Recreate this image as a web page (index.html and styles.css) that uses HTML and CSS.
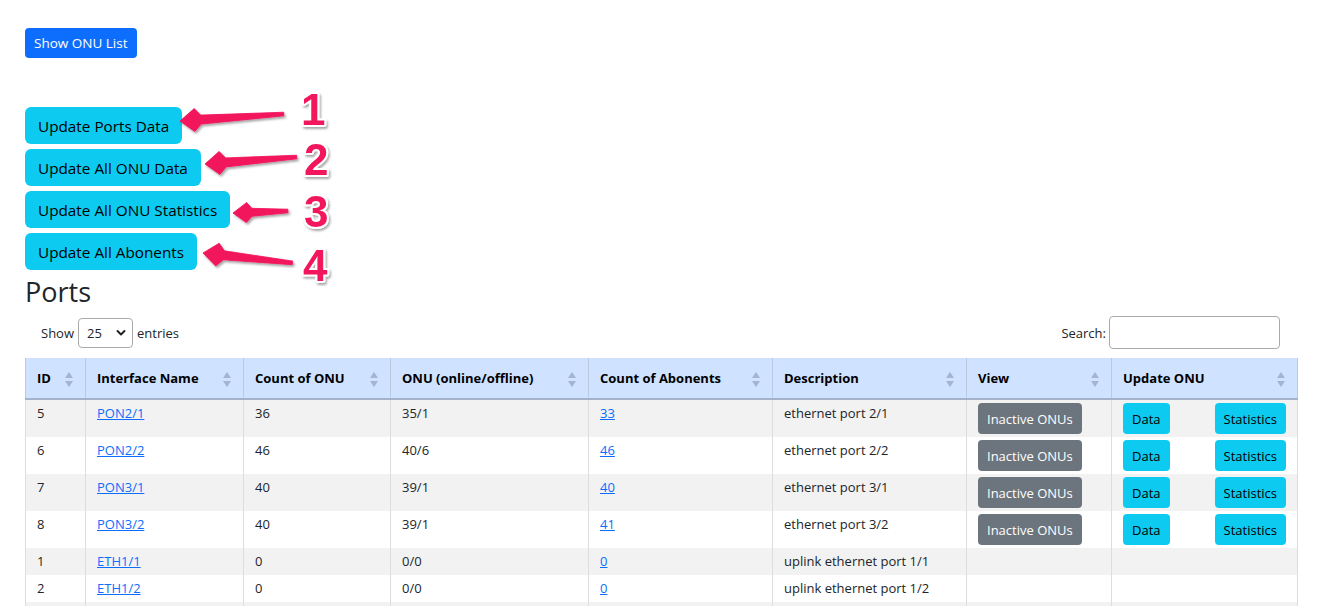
FILE: index.html
```html
<!DOCTYPE html>
<html lang="en">
<head>
<meta charset="utf-8">
<title>Ports</title>
<link rel="stylesheet" href="styles.css">
</head>
<body>
<main class="page">
  <div class="top-bar">
    <button class="btn btn-show">Show ONU List</button>
  </div>

  <div class="actions">
    <button class="btn btn-info btn-action">Update Ports Data</button>
    <button class="btn btn-info btn-action">Update All ONU Data</button>
    <button class="btn btn-info btn-action">Update All ONU Statistics</button>
    <button class="btn btn-info btn-action">Update All Abonents</button>
  </div>

  <h3 class="title">Ports</h3>

  <div class="dt-controls">
    <label class="dt-length">Show
      <span class="select-wrap">
        <select class="dt-select"><option>25</option><option>50</option><option>100</option></select>
        <svg class="chevron" width="10" height="8" viewBox="0 0 10 8"><path d="M1.5 2 L5 5.5 L8.5 2" fill="none" stroke="#222" stroke-width="2" stroke-linecap="round" stroke-linejoin="round"/></svg>
      </span>
      entries</label>
    <label class="dt-search">Search:<input class="dt-input" type="search"></label>
  </div>

  <table class="ports">
    <colgroup>
      <col class="c-id"><col class="c-name"><col class="c-count"><col class="c-onu">
      <col class="c-ab"><col class="c-desc"><col class="c-view"><col class="c-upd">
    </colgroup>
    <thead>
      <tr>
        <th class="sort">ID</th>
        <th class="sort">Interface Name</th>
        <th class="sort">Count of ONU</th>
        <th class="sort">ONU (online/offline)</th>
        <th class="sort">Count of Abonents</th>
        <th class="sort">Description</th>
        <th class="sort">View</th>
        <th class="sort">Update ONU</th>
      </tr>
    </thead>
    <tbody>
      <tr>
        <td>5</td><td><a href="#">PON2/1</a></td><td>36</td><td>35/1</td><td><a href="#">33</a></td><td>ethernet port 2/1</td>
        <td><button class="btn btn-sm btn-secondary">Inactive ONUs</button></td>
        <td><div class="upd"><button class="btn btn-sm btn-info">Data</button><button class="btn btn-sm btn-info">Statistics</button></div></td>
      </tr>
      <tr>
        <td>6</td><td><a href="#">PON2/2</a></td><td>46</td><td>40/6</td><td><a href="#">46</a></td><td>ethernet port 2/2</td>
        <td><button class="btn btn-sm btn-secondary">Inactive ONUs</button></td>
        <td><div class="upd"><button class="btn btn-sm btn-info">Data</button><button class="btn btn-sm btn-info">Statistics</button></div></td>
      </tr>
      <tr>
        <td>7</td><td><a href="#">PON3/1</a></td><td>40</td><td>39/1</td><td><a href="#">40</a></td><td>ethernet port 3/1</td>
        <td><button class="btn btn-sm btn-secondary">Inactive ONUs</button></td>
        <td><div class="upd"><button class="btn btn-sm btn-info">Data</button><button class="btn btn-sm btn-info">Statistics</button></div></td>
      </tr>
      <tr>
        <td>8</td><td><a href="#">PON3/2</a></td><td>40</td><td>39/1</td><td><a href="#">41</a></td><td>ethernet port 3/2</td>
        <td><button class="btn btn-sm btn-secondary">Inactive ONUs</button></td>
        <td><div class="upd"><button class="btn btn-sm btn-info">Data</button><button class="btn btn-sm btn-info">Statistics</button></div></td>
      </tr>
      <tr>
        <td>1</td><td><a href="#">ETH1/1</a></td><td>0</td><td>0/0</td><td><a href="#">0</a></td><td>uplink ethernet port 1/1</td><td></td><td></td>
      </tr>
      <tr>
        <td>2</td><td><a href="#">ETH1/2</a></td><td>0</td><td>0/0</td><td><a href="#">0</a></td><td>uplink ethernet port 1/2</td><td></td><td></td>
      </tr>
      <tr class="filler">
        <td></td><td></td><td></td><td></td><td></td><td></td><td></td><td></td>
      </tr>
    </tbody>
  </table>
</main>

<svg class="annotations" width="1318" height="606" viewBox="0 0 1318 606">
  <defs>
    <filter id="shadow" x="-20%" y="-50%" width="140%" height="200%">
      <feDropShadow dx="1.5" dy="2" stdDeviation="1.2" flood-color="#000" flood-opacity="0.35"/>
    </filter>
  </defs>
  <g class="arrow" filter="url(#shadow)">
    <polygon transform="translate(180 121) rotate(-3.85)" points="0,0 15,-11.5 21,-4.5 104,-1.8 104,1.8 21,4.5 14,11.5"/>
    <polygon transform="translate(205 164) rotate(-4.35)" points="0,0 15,-11.5 21,-4.5 92,-1.8 92,1.8 21,4.5 14,11.5"/>
    <polygon transform="translate(233 213) rotate(-2.1)" points="0,0 14,-10 19,-4 55,-1.8 55,1.8 19,4 13,10"/>
    <polygon transform="translate(203 253) rotate(6.3)" points="0,0 15,-11.5 21,-4.5 90,-1.8 90,1.8 21,4.5 14,11.5"/>
  </g>
  <g class="nums" filter="url(#shadow)">
    <text x="301" y="125">1</text>
    <text x="304" y="175">2</text>
    <text x="304" y="227">3</text>
    <text x="303" y="281">4</text>
  </g>
</svg>
</body>
</html>
```

FILE: styles.css
```css
* { box-sizing: border-box; }

html, body {
  margin: 0;
  background: #fff;
}

body {
  font-family: "Open Sans", "Noto Sans", sans-serif;
  color: #212529;
  position: relative;
  width: 1318px;
  height: 606px;
  overflow: hidden;
}

.page {
  padding: 28px 21px 0 25px;
}

.btn {
  display: inline-flex;
  align-items: center;
  justify-content: center;
  border: 0;
  font-family: inherit;
  white-space: nowrap;
  cursor: pointer;
}

.btn-show {
  height: 30px;
  padding: 0 9px;
  background: #0d6efd;
  color: #fff;
  font-size: 13.5px;
  border-radius: 4px;
}

.btn-info {
  background: #0dcaf0;
  color: #000;
}

.btn-secondary {
  background: #6c757d;
  color: #fff;
}

.actions {
  display: flex;
  flex-direction: column;
  align-items: flex-start;
  gap: 5px;
  margin-top: 49px;
}

.btn-action {
  height: 37px;
  padding: 0 13px;
  font-size: 15.3px;
  border-radius: 6px;
}

.title {
  margin: 6px 0 0;
  font-size: 27px;
  font-weight: 500;
  line-height: 32px;
  color: #212529;
}

.dt-controls {
  display: flex;
  justify-content: space-between;
  align-items: center;
  padding: 0 17px 0 16px;
  margin-top: 8px;
  font-size: 13px;
}

.dt-length {
  display: flex;
  align-items: center;
  gap: 4px;
}

.select-wrap {
  position: relative;
  display: inline-block;
}

.dt-select {
  appearance: none;
  -webkit-appearance: none;
  width: 55px;
  height: 30px;
  padding: 0 0 0 8px;
  border: 1px solid #aaa;
  border-radius: 4px;
  background: #fff;
  font-family: inherit;
  font-size: 13px;
  color: #212529;
}

.chevron {
  position: absolute;
  right: 7px;
  top: 11px;
  pointer-events: none;
}

.dt-search {
  display: flex;
  align-items: center;
  gap: 3px;
}

.dt-input {
  width: 171px;
  height: 33px;
  border: 1px solid #aaa;
  border-radius: 4px;
  padding: 0 6px;
  font-family: inherit;
}

.ports {
  width: 1272px;
  margin-top: 9px;
  table-layout: fixed;
  border-collapse: collapse;
  font-size: 13px;
}

.c-id { width: 60px; }
.c-name { width: 158px; }
.c-count { width: 147px; }
.c-onu { width: 198px; }
.c-ab { width: 184px; }
.c-desc { width: 194px; }
.c-view { width: 145px; }
.c-upd { width: 186px; }

.ports th {
  position: relative;
  background: #cfe2ff;
  color: #000;
  font-weight: 700;
  text-align: left;
  height: 41px;
  padding: 0 11px;
  border-left: 1px solid #b9c9e0;
  border-right: 1px solid #b9c9e0;
  border-bottom: 2px solid #a4b3c9;
}

.ports th.sort::before,
.ports th.sort::after {
  content: "";
  position: absolute;
  right: 12px;
  width: 0;
  height: 0;
  border-left: 4px solid transparent;
  border-right: 4px solid transparent;
}

.ports th.sort::before {
  top: 14px;
  border-bottom: 6px solid #a3b4d1;
}

.ports th.sort::after {
  top: 23px;
  border-top: 6px solid #a3b4d1;
}

.ports td {
  padding: 3px 11px;
  line-height: 21px;
  vertical-align: top;
  border-left: 1px solid #dadee3;
  border-right: 1px solid #dadee3;
  white-space: nowrap;
}

.ports tr.filler td {
  height: 27px;
}

.ports tbody tr:nth-child(odd) td {
  background: #f2f2f2;
}

.ports a {
  color: #0d6efd;
  text-decoration: underline;
}

.btn-sm {
  height: 31px;
  padding: 0 9px;
  font-size: 13px;
  border-radius: 4px;
}

.upd {
  display: flex;
  justify-content: space-between;
}

.annotations {
  position: absolute;
  left: 0;
  top: 0;
  pointer-events: none;
}

.arrow polygon {
  fill: #f2145c;
  stroke: #f2145c;
  stroke-width: 0.8;
  stroke-linejoin: round;
}

.nums text {
  font-family: "Liberation Sans", "DejaVu Sans", sans-serif;
  font-weight: 700;
  font-size: 44px;
  fill: #f2145c;
  stroke: #fff;
  stroke-width: 4px;
  stroke-linejoin: round;
  paint-order: stroke fill;
}
```
